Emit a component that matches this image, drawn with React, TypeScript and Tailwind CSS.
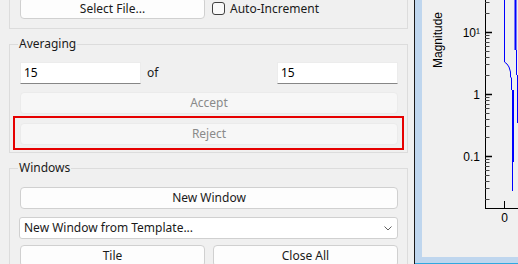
import clsx from 'clsx'

const minorTicks = (() => {
  // log axis: 62px per decade, "1" sits at y 94
  const ys: number[] = []
  for (let d = -2; d <= 1; d++) {
    for (let k = 2; k <= 9; k++) {
      const y = 94 - 62 * (d + Math.log10(k))
      if (y > 0 && y < 208) ys.push(y)
    }
  }
  return ys
})()

function Btn({ children, className, disabled }: { children: React.ReactNode; className?: string; disabled?: boolean }) {
  return (
    <button
      disabled={disabled}
      className={clsx(
        'h-[22px] shrink-0 rounded-[4px] border text-[12px] leading-none flex items-center justify-center',
        disabled
          ? 'border-[#ebebeb] bg-[#f7f7f7] text-[#8a8a8a]'
          : 'border-[#d0d0d0] bg-[#fdfdfd] text-[#1a1a1a]',
        className
      )}
    >
      {children}
    </button>
  )
}

function NumBox({ value, className }: { value: string; className?: string }) {
  return (
    <div
      className={clsx(
        'h-[22px] bg-white border border-[#ececec] border-b-[#868686] pl-[3px] flex items-center text-[12px] text-black',
        className
      )}
    >
      {value}
    </div>
  )
}

function Plot() {
  return (
    <svg className="block w-[96px] h-[257px]" viewBox="422 0 96 257" fontFamily="'Liberation Sans', Arial, sans-serif" fontSize="12">
      <text x="442" y="40" textAnchor="middle" transform="rotate(-90 442 40)" fill="#000">
        Magnitude
      </text>
      <text x="480" y="37" textAnchor="end" fill="#000">10¹</text>
      <text x="480" y="98.5" textAnchor="end" fill="#000">1</text>
      <text x="480" y="160.5" textAnchor="end" fill="#000">0.1</text>
      <text x="504.5" y="222" textAnchor="middle" fill="#000">0</text>

      {/* axes */}
      <line x1="485.5" y1="0" x2="485.5" y2="208.5" stroke="#000" strokeWidth="1" />
      <line x1="485" y1="208.5" x2="518" y2="208.5" stroke="#000" strokeWidth="1" />
      <line x1="504.5" y1="201" x2="504.5" y2="208" stroke="#000" strokeWidth="1" />
      {[32, 94, 156].map((y) => (
        <line key={y} x1="485" y1={y + 0.5} x2="492" y2={y + 0.5} stroke="#000" strokeWidth="1.5" />
      ))}
      {minorTicks.map((y) => (
        <line key={y} x1="485" y1={Math.round(y) + 0.5} x2="489.5" y2={Math.round(y) + 0.5} stroke="#444" strokeWidth="1" />
      ))}

      {/* data traces */}
      <g fill="none" stroke="#0000ff">
        <path d="M504.5,0 V62 L507,64 L509,67 L510.5,72 V77 L511.5,78 V90" strokeWidth="1" />
        <path d="M513,90 V162" strokeWidth="2" />
        <path d="M512.5,162 V191" strokeWidth="1" />
        <path d="M515.5,0 V50" strokeWidth="2" />
        <path d="M516.5,50 V75 M517.5,75 V123" strokeWidth="1" />
      </g>
    </svg>
  )
}

export default function App() {
  return (
    <div className="w-[518px] h-[264px] flex bg-[#f0f0f0] overflow-hidden text-[12px] text-[#1a1a1a] font-['Noto_Sans',sans-serif]">
      {/* Left control panel */}
      <div className="w-[414px] shrink-0 flex flex-col pl-[9px]">
        {/* File group (top cut off) */}
        <div className="h-[29px] w-[399px] shrink-0 border border-t-0 border-[#dcdcdc] flex items-start pl-[10px]">
          <Btn className="w-[185px] mt-[-3px] pt-[2px]">Select File...</Btn>
          <label className="flex items-center ml-[7px] mt-[2px] h-[13px]">
            <span className="w-[13px] h-[13px] rounded-[3px] border border-[#404040] bg-[#f9f9f9]" />
            <span className="ml-[5px] leading-none">Auto-Increment</span>
          </label>
        </div>

        {/* Averaging */}
        <div className="relative mt-[15px] h-[109px] w-[399px] shrink-0 border border-[#dcdcdc] pt-[17px] pl-[10px] pr-[9px]">
          <span className="absolute left-[8px] top-[-9px] px-[1px] bg-[#f0f0f0] leading-[16px]">Averaging</span>
          <div className="flex items-center">
            <NumBox value="15" className="w-[121px]" />
            <span className="ml-[6px]">of</span>
            <NumBox value="15" className="w-[121px] ml-auto" />
          </div>
          <Btn disabled className="w-full mt-[8px] h-[21px]">Accept</Btn>
          <div className="mt-[2px] -ml-[7px] -mr-[6px] border-2 border-[#e60000] pl-[5px] pr-[4px] pt-[5px] pb-[3px]">
            <Btn disabled className="w-full h-[21px]">Reject</Btn>
          </div>
        </div>

        {/* Windows */}
        <div className="relative mt-[15px] h-[120px] w-[399px] shrink-0 border border-[#dcdcdc] pt-[18px] pl-[10px] pr-[9px]">
          <span className="absolute left-[8px] top-[-9px] px-[1px] bg-[#f0f0f0] leading-[16px]">Windows</span>
          <Btn className="w-full">New Window</Btn>
          <div className="mt-[8px] -ml-[1px] h-[22px] rounded-[3px] border border-[#d0d0d0] bg-white flex items-center pl-[4px] pr-[5px]">
            <span className="flex-1">New Window from Template...</span>
            <svg width="8" height="5" viewBox="0 0 8 5">
              <polyline points="0.5,0.5 4,4 7.5,0.5" fill="none" stroke="#606060" strokeWidth="1" />
            </svg>
          </div>
          <div className="mt-[6px] flex gap-[8px]">
            <Btn className="w-[185px]">Tile</Btn>
            <Btn className="w-[185px]">Close All</Btn>
          </div>
        </div>
      </div>

      {/* Divider */}
      <div className="w-px shrink-0 bg-[#1a1a1a]" />

      {/* Plot window */}
      <div className="flex-1 flex flex-col">
        <div className="h-[263px] border-l-[7px] border-b-[6px] border-[#bfd6ee] bg-[#f0f0f0] overflow-hidden">
          <Plot />
        </div>
        <div className="h-px bg-[#30a8e0]" />
      </div>
    </div>
  )
}
